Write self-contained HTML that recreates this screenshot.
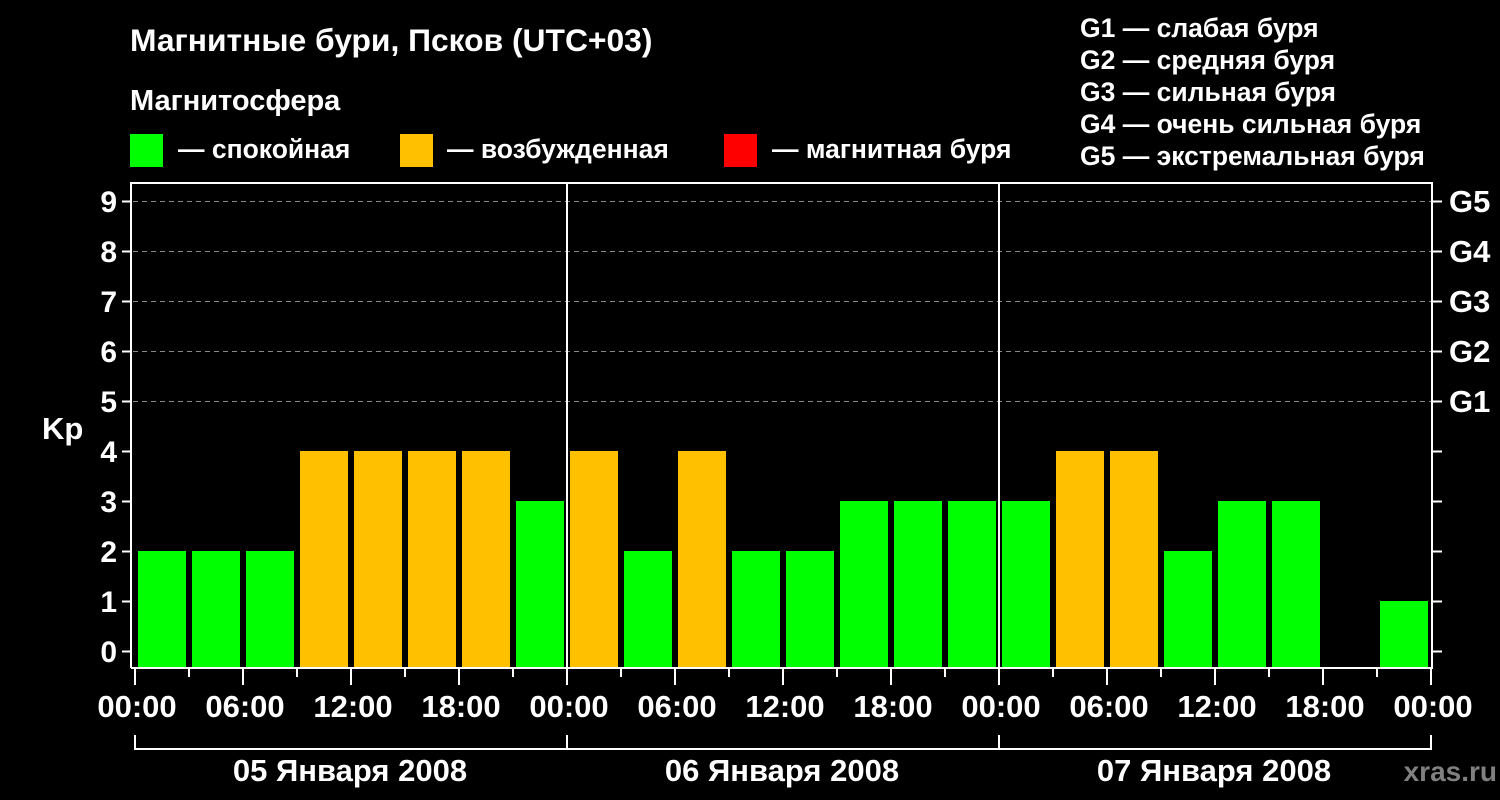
<!DOCTYPE html>
<html><head><meta charset="utf-8"><style>
html,body{margin:0;padding:0;background:#000;}
svg{display:block;font-family:"Liberation Sans",Arial,sans-serif;font-weight:bold;}
</style></head><body>
<svg width="1500" height="800" xmlns="http://www.w3.org/2000/svg">
<rect width="1500" height="800" fill="#000"/>
<g fill="#fff">
<text x="130" y="51" font-size="31.8">Магнитные бури, Псков (UTC+03)</text>
<text x="130" y="110" font-size="29">Магнитосфера</text>
<g font-size="26.5">
<text x="178" y="158">— спокойная</text>
<text x="447" y="158">— возбужденная</text>
<text x="772" y="158">— магнитная буря</text>
<text x="1080" y="37">G1 — слабая буря</text>
<text x="1080" y="69">G2 — средняя буря</text>
<text x="1080" y="101">G3 — сильная буря</text>
<text x="1080" y="133">G4 — очень сильная буря</text>
<text x="1080" y="165">G5 — экстремальная буря</text>
</g>
</g>
<rect x="130" y="134" width="33" height="33" fill="#00ff00"/>
<rect x="400" y="134" width="33" height="33" fill="#ffc000"/>
<rect x="724" y="134" width="33" height="33" fill="#ff0000"/>
<g stroke="#888" stroke-width="1" stroke-dasharray="5,4">
<line x1="133" y1="201.5" x2="1431" y2="201.5"/>
<line x1="133" y1="251.5" x2="1431" y2="251.5"/>
<line x1="133" y1="301.5" x2="1431" y2="301.5"/>
<line x1="133" y1="351.5" x2="1431" y2="351.5"/>
<line x1="133" y1="401.5" x2="1431" y2="401.5"/>
</g>
<g>
<rect x="138" y="551" width="48" height="117" fill="#00ff00"/>
<rect x="192" y="551" width="48" height="117" fill="#00ff00"/>
<rect x="246" y="551" width="48" height="117" fill="#00ff00"/>
<rect x="300" y="451" width="48" height="217" fill="#ffc000"/>
<rect x="354" y="451" width="48" height="217" fill="#ffc000"/>
<rect x="408" y="451" width="48" height="217" fill="#ffc000"/>
<rect x="462" y="451" width="48" height="217" fill="#ffc000"/>
<rect x="516" y="501" width="48" height="167" fill="#00ff00"/>
<rect x="570" y="451" width="48" height="217" fill="#ffc000"/>
<rect x="624" y="551" width="48" height="117" fill="#00ff00"/>
<rect x="678" y="451" width="48" height="217" fill="#ffc000"/>
<rect x="732" y="551" width="48" height="117" fill="#00ff00"/>
<rect x="786" y="551" width="48" height="117" fill="#00ff00"/>
<rect x="840" y="501" width="48" height="167" fill="#00ff00"/>
<rect x="894" y="501" width="48" height="167" fill="#00ff00"/>
<rect x="948" y="501" width="48" height="167" fill="#00ff00"/>
<rect x="1002" y="501" width="48" height="167" fill="#00ff00"/>
<rect x="1056" y="451" width="48" height="217" fill="#ffc000"/>
<rect x="1110" y="451" width="48" height="217" fill="#ffc000"/>
<rect x="1164" y="551" width="48" height="117" fill="#00ff00"/>
<rect x="1218" y="501" width="48" height="167" fill="#00ff00"/>
<rect x="1272" y="501" width="48" height="167" fill="#00ff00"/>
<rect x="1380" y="601" width="48" height="67" fill="#00ff00"/>
</g>
<g stroke="#fff" stroke-width="2" fill="none">
<polyline points="131,668 131,183 1432,183 1432,668 131,668"/>
<line x1="567" y1="183" x2="567" y2="668"/>
<line x1="999" y1="183" x2="999" y2="668"/>
<path d="M122,201.5h9M122,251.5h9M122,301.5h9M122,351.5h9M122,401.5h9M122,451.5h9M122,501.5h9M122,551.5h9M122,601.5h9M122,651.5h9"/>
<path d="M1432,201.5h10M1432,251.5h10M1432,301.5h10M1432,351.5h10M1432,401.5h10M1432,451.5h10M1432,501.5h10M1432,551.5h10M1432,601.5h10M1432,651.5h10"/>
<path d="M135,669v16M189,669v8M243,669v16M297,669v8M351,669v16M405,669v8M459,669v16M513,669v8M567,669v16M621,669v8M675,669v16M729,669v8M783,669v16M837,669v8M891,669v16M945,669v8M999,669v16M1053,669v8M1107,669v16M1161,669v8M1215,669v16M1269,669v8M1323,669v16M1377,669v8M1431,669v16"/>
<path d="M135,735v14H1431V735M567,735v14M999,735v14"/>
</g>
<g fill="#fff" font-size="30" text-anchor="end">
<text x="117" y="212">9</text><text x="117" y="262">8</text><text x="117" y="312">7</text><text x="117" y="362">6</text><text x="117" y="412">5</text><text x="117" y="462">4</text><text x="117" y="512">3</text><text x="117" y="562">2</text><text x="117" y="612">1</text><text x="117" y="662">0</text>
</g>
<text x="42" y="439" fill="#fff" font-size="31">Kp</text>
<g fill="#fff" font-size="31">
<text x="1449" y="212">G5</text><text x="1449" y="262">G4</text><text x="1449" y="312">G3</text><text x="1449" y="362">G2</text><text x="1449" y="412">G1</text>
</g>
<g fill="#fff" font-size="31" text-anchor="middle">
<text x="137" y="717">00:00</text><text x="245" y="717">06:00</text><text x="353" y="717">12:00</text><text x="461" y="717">18:00</text>
<text x="569" y="717">00:00</text><text x="677" y="717">06:00</text><text x="785" y="717">12:00</text><text x="893" y="717">18:00</text>
<text x="1001" y="717">00:00</text><text x="1109" y="717">06:00</text><text x="1217" y="717">12:00</text><text x="1325" y="717">18:00</text>
<text x="1433" y="717">00:00</text>
<text x="350" y="781">05 Января 2008</text>
<text x="782" y="781">06 Января 2008</text>
<text x="1214" y="781">07 Января 2008</text>
</g>
<text x="1497" y="781" fill="#808080" font-size="28" text-anchor="end">xras.ru</text>
</svg>
</body></html>
